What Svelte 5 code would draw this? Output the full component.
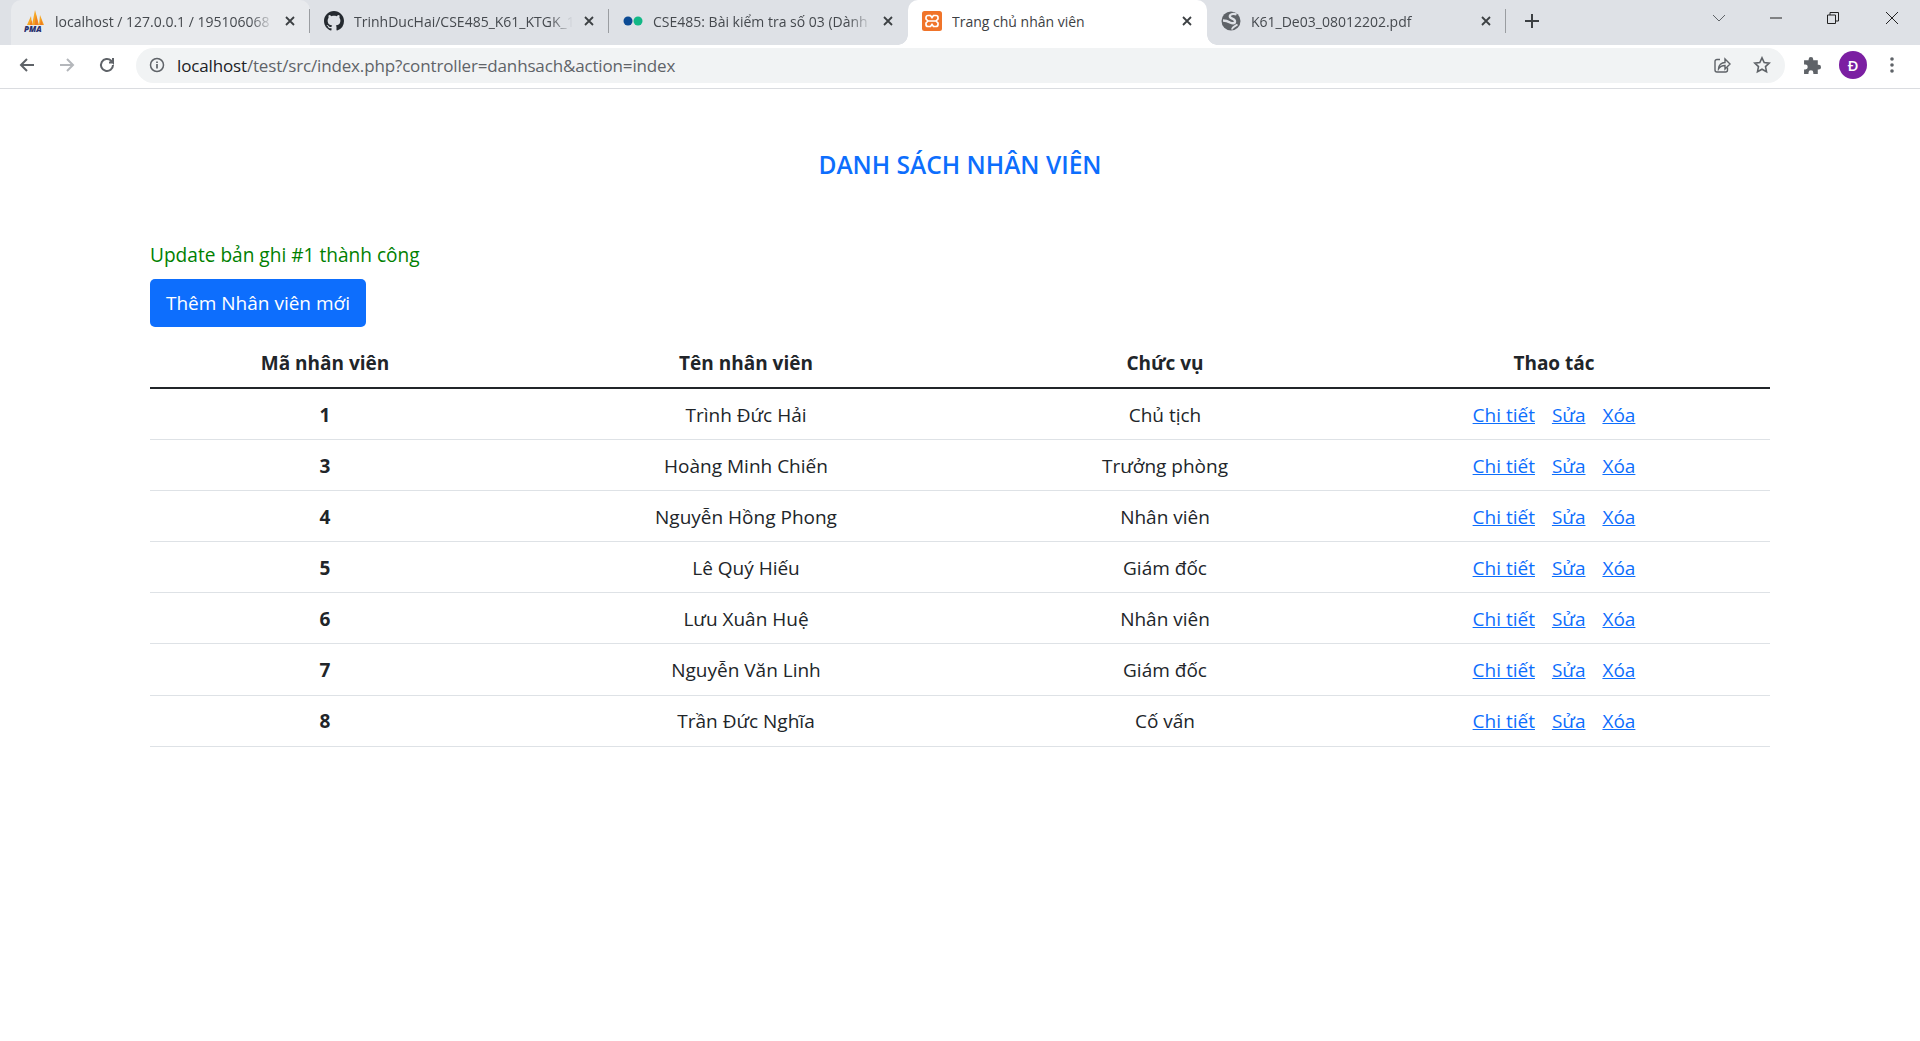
<script>
	const tabs = [
		{ title: 'localhost / 127.0.0.1 / 195106068', icon: 'pma', hover: true },
		{ title: 'TrinhDucHai/CSE485_K61_KTGK_1', icon: 'github' },
		{ title: 'CSE485: Bài kiểm tra số 03 (Dành', icon: 'dots' },
		{ title: 'Trang chủ nhân viên', icon: 'xampp', active: true },
		{ title: 'K61_De03_08012202.pdf', icon: 'globe' }
	];

	const employees = [
		{ id: 1, name: 'Trình Đức Hải', role: 'Chủ tịch' },
		{ id: 3, name: 'Hoàng Minh Chiến', role: 'Trưởng phòng' },
		{ id: 4, name: 'Nguyễn Hồng Phong', role: 'Nhân viên' },
		{ id: 5, name: 'Lê Quý Hiếu', role: 'Giám đốc' },
		{ id: 6, name: 'Lưu Xuân Huệ', role: 'Nhân viên' },
		{ id: 7, name: 'Nguyễn Văn Linh', role: 'Giám đốc' },
		{ id: 8, name: 'Trần Đức Nghĩa', role: 'Cố vấn' }
	];
</script>

<div class="browser">
	<div class="tabstrip">
		{#each tabs as tab}
			<div class="tab" class:active={tab.active} class:hover={tab.hover}>
				<span class="favicon">
					{#if tab.icon === 'pma'}
						<svg viewBox="0 0 22 22" width="22" height="22">
							<path d="M3 15 7 6l1 9zM8 15 11 0l4 15zM15 15l1-10 4 10z" fill="#f6a623" />
							<path d="M5.500 15 7.500 10l1 5zM10.500 15 12 5l2.500 10zM16 15l1-6 2 6z" fill="#ee7f22" />
							<text x="0" y="21.500" class="pma">PMA</text>
						</svg>
					{:else if tab.icon === 'github'}
						<svg viewBox="0 0 16 16" width="20" height="20">
							<path fill="#24292f" d="M8 0C3.580 0 0 3.580 0 8c0 3.540 2.290 6.530 5.470 7.590.4.070.55-.17.55-.38 0-.19-.01-.82-.01-1.490-2.010.37-2.530-.49-2.690-.94-.09-.23-.48-.94-.82-1.130-.28-.15-.68-.52-.01-.53.63-.01 1.080.58 1.230.82.720 1.210 1.870.87 2.330.66.070-.52.280-.87.510-1.070-1.780-.2-3.640-.89-3.640-3.950 0-.87.310-1.590.820-2.150-.08-.2-.36-1.020.08-2.120 0 0 .67-.21 2.200.82.640-.18 1.320-.27 2-.27s1.360.09 2 .27c1.530-1.040 2.200-.82 2.200-.82.440 1.100.160 1.920.080 2.120.510.560.820 1.270.820 2.150 0 3.070-1.870 3.750-3.650 3.950.290.250.540.730.540 1.480 0 1.070-.01 1.930-.01 2.200 0 .210.150.460.550.380A8.010 8.010 0 0 0 16 8c0-4.420-3.580-8-8-8z" />
						</svg>
					{:else if tab.icon === 'dots'}
						<svg viewBox="0 0 20 20" width="20" height="20">
							<circle cx="5" cy="10" r="4.500" fill="#0b4a94" />
							<circle cx="15" cy="10" r="4.500" fill="#12b886" />
						</svg>
					{:else if tab.icon === 'xampp'}
						<svg viewBox="0 0 20 20" width="20" height="20">
							<rect width="20" height="20" rx="2.500" fill="#f0742a" />
							<path d="M6 4.500h2.500L10 6.500l1.500-2H14a2 2 0 0 1 2 2V8l-2 2 2 2v1.500a2 2 0 0 1-2 2h-2.500l-1.500-2-1.500 2H6a2 2 0 0 1-2-2V12l2-2-2-2V6.500a2 2 0 0 1 2-2zM6.500 10h7" fill="none" stroke="#fff" stroke-width="1.700" />
						</svg>
					{:else}
						<svg viewBox="0 0 20 20" width="20" height="20">
							<circle cx="10" cy="10" r="9.500" fill="#5f6368" />
							<path d="M15.500 3.500C12 2 8 3.500 9 6c.8 2 5 1.500 5 4.500 0 2.500-3 2-5 1C6.500 10 4 9.500 2 9.500" fill="none" stroke="#dee1e6" stroke-width="2.400" />
							<path d="M11 18.500c0-2 2-3 5.500-5" fill="none" stroke="#dee1e6" stroke-width="1.800" />
						</svg>
					{/if}
				</span>
				<span class="tab-title">{tab.title}</span>
				<svg class="tab-close" viewBox="0 0 12 12" width="12" height="12">
					<path d="M2 2l8 8M10 2l-8 8" stroke="#3c4043" stroke-width="1.800" fill="none" />
				</svg>
			</div>
		{/each}
		<svg class="newtab" viewBox="0 0 16 16" width="16" height="16">
			<path d="M8 1v14M1 8h14" stroke="#3c4043" stroke-width="2" fill="none" />
		</svg>
		<div class="window-controls">
			<svg class="ctl-chevron" viewBox="0 0 14 8" width="14" height="8"><path d="M1 1l6 6 6-6" stroke="#5f6368" fill="none" /></svg>
			<svg class="ctl-min" viewBox="0 0 12 2" width="12" height="2"><path d="M0 1h12" stroke="#222" /></svg>
			<svg class="ctl-max" viewBox="0 0 12 12" width="12" height="12"><path d="M.5 3h8v8.500h-8zM3 3V.5h8.500V9H8.500" stroke="#222" fill="none" /></svg>
			<svg class="ctl-close" viewBox="0 0 14 14" width="14" height="14"><path d="M1 1l12 12M13 1L1 13" stroke="#222" fill="none" /></svg>
		</div>
	</div>
	<div class="toolbar">
		<svg viewBox="0 0 18 18" width="18" height="18"><path d="M16 9H3M9 3L3 9l6 6" stroke="#5f6368" stroke-width="2" fill="none" /></svg>
		<svg viewBox="0 0 18 18" width="18" height="18"><path d="M2 9h13M9 3l6 6-6 6" stroke="#b4b7bb" stroke-width="2" fill="none" /></svg>
		<svg viewBox="0 0 18 18" width="18" height="18"><path d="M15 9a6 6 0 1 1-1.800-4.300L15 6.500V2M15 6.500h-4" stroke="#5f6368" stroke-width="2" fill="none" /></svg>
		<div class="omnibox">
			<svg viewBox="0 0 16 16" width="16" height="16">
				<circle cx="8" cy="8" r="6.500" stroke="#5f6368" stroke-width="1.500" fill="none" />
				<path d="M8 7v4.500M8 4.500v1.500" stroke="#5f6368" stroke-width="1.700" />
			</svg>
			<span class="url"><b>localhost</b>/test/src/index.php?controller=danhsach&amp;action=index</span>
			<svg viewBox="0 0 18 18" width="18" height="18">
				<path d="M7 3.500H4a2 2 0 0 0-2 2V14a2 2 0 0 0 2 2h8.500a2 2 0 0 0 2-2v-2.500" stroke="#5f6368" stroke-width="1.400" fill="none" />
				<path d="M5.500 13c0-4 3-6.500 6.500-6.500V3l5 5-5 5V9.500c-3 0-5 1-6.500 3.500z" stroke="#5f6368" stroke-width="1.400" fill="#f1f3f4" />
			</svg>
			<svg viewBox="0 0 18 18" width="18" height="18">
				<path d="M9 1.800l2.200 4.700 5 .6-3.700 3.500 1 5.100L9 13.200l-4.500 2.500 1-5.100L1.800 7.100l5-.6z" stroke="#5f6368" stroke-width="1.600" fill="none" />
			</svg>
		</div>
		<svg class="puzzle" viewBox="0 0 18 18" width="19" height="19">
			<path fill="#5f6368" d="M7.500 1a2.200 2.200 0 0 1 2.200 2.200V4H14v4.300h.8a2.300 2.300 0 1 1 0 4.600H14V17H9.800v-1.200a2.300 2.300 0 1 0-4.600 0V17H1v-4.300h1.200a2.300 2.300 0 1 0 0-4.600H1V4h4.300v-.8A2.200 2.200 0 0 1 7.500 1z" />
		</svg>
		<span class="avatar">Đ</span>
		<svg viewBox="0 0 4 18" width="4" height="18">
			<circle cx="2" cy="3" r="1.800" fill="#5f6368" /><circle cx="2" cy="9" r="1.800" fill="#5f6368" /><circle cx="2" cy="15" r="1.800" fill="#5f6368" />
		</svg>
	</div>
</div>

<main class="container">
	<h1>DANH SÁCH NHÂN VIÊN</h1>
	<p class="message">Update bản ghi #1 thành công</p>
	<a class="btn" href="#add">Thêm Nhân viên mới</a>
	<table>
		<colgroup>
			<col class="c1" /><col class="c2" /><col class="c3" /><col class="c4" />
		</colgroup>
		<thead>
			<tr>
				<th>Mã nhân viên</th>
				<th>Tên nhân viên</th>
				<th>Chức vụ</th>
				<th>Thao tác</th>
			</tr>
		</thead>
		<tbody>
			{#each employees as e}
				<tr>
					<th>{e.id}</th>
					<td>{e.name}</td>
					<td>{e.role}</td>
					<td>
						<a href="#detail">Chi tiết</a>
						<a href="#edit">Sửa</a>
						<a href="#delete">Xóa</a>
					</td>
				</tr>
			{/each}
		</tbody>
	</table>
</main>

<style>
	:global(body) {
		background: #fff;
		font-family: "Open Sans", "Noto Sans", sans-serif;
		color: #212529;
	}

	.tabstrip {
		display: flex;
		align-items: center;
		height: 45px;
		padding-left: 11px;
		background: #dee1e6;
	}

	.tab {
		display: flex;
		align-items: center;
		position: relative;
		flex: none;
		width: 299px;
		height: 45px;
		padding: 0 14px 3px 14px;
		box-sizing: border-box;
		color: #45494e;
	}

	.tab::after {
		content: '';
		position: absolute;
		right: 0;
		top: 9px;
		height: 24px;
		width: 1px;
		background: #9a9da1;
	}

	.tab.hover {
		background: #e8eaed;
		border-radius: 10px 10px 0 0;
	}

	.tab.active {
		background: #fff;
		border-radius: 10px 10px 0 0;
		color: #3c4043;
	}

	/* the little flares at the foot of the active tab */
	.tab.active::before,
	.tab.active::after {
		content: '';
		position: absolute;
		top: auto;
		bottom: 0;
		width: 10px;
		height: 10px;
		background: radial-gradient(circle at 0 0, #dee1e6 9.500px, #fff 10px);
	}

	.tab.active::before {
		left: -10px;
	}

	.tab.active::after {
		right: -10px;
		background: radial-gradient(circle at 100% 0, #dee1e6 9.500px, #fff 10px);
	}

	.tab:nth-child(3)::after,
	.tab.hover::after {
		background: #9a9da1;
	}

	.tab:nth-child(3)::after {
		display: none;
	}

	.favicon {
		display: flex;
		flex: none;
		width: 20px;
		margin-right: 10px;
		justify-content: center;
	}

	.favicon svg {
		flex: none;
	}

	.pma {
		font-size: 8px;
		font-weight: 800;
		font-style: italic;
		fill: #27306e;
	}

	.tab-title {
		flex: 1;
		overflow: hidden;
		white-space: nowrap;
		font-size: 14px;
		mask-image: linear-gradient(to left, transparent, #000 24px);
	}

	.tab.active .tab-title,
	.tab:last-of-type .tab-title {
		mask-image: none;
	}

	.tab-close {
		flex: none;
		margin-left: 10px;
	}

	.newtab {
		margin-left: 18px;
		margin-bottom: 3px;
	}

	.window-controls {
		display: flex;
		align-items: center;
		margin-left: auto;
		height: 36px;
		align-self: flex-start;
	}

	.ctl-chevron {
		margin-right: 44px;
	}

	.ctl-min {
		margin-right: 45px;
	}

	.ctl-max {
		margin-right: 45.500px;
	}

	.ctl-close {
		margin-right: 21.500px;
	}

	.toolbar {
		display: flex;
		align-items: center;
		height: 44px;
		box-sizing: border-box;
		padding: 0 26px 3px 18px;
		border-bottom: 1px solid #dadce0;
		gap: 22px;
	}

	.omnibox {
		display: flex;
		align-items: center;
		flex: 1;
		height: 35px;
		margin-left: -2px;
		padding: 0 14px 0 13px;
		background: #f1f3f4;
		border-radius: 18px;
		gap: 22px;
	}

	.url {
		flex: 1;
		margin-left: -10px;
		font-size: 17px;
		letter-spacing: -0.15px;
		color: #5f6368;
	}

	.url b {
		font-weight: 400;
		color: #202124;
	}

	.puzzle {
		margin-left: -4px;
	}

	.avatar {
		display: flex;
		align-items: center;
		justify-content: center;
		width: 28px;
		height: 28px;
		margin: 0 1px 0 -5px;
		border-radius: 50%;
		background: #7b1fa2;
		color: #fff;
		font-size: 15px;
		font-weight: 600;
	}

	.container {
		width: 1620px;
		margin-left: 150px;
		padding-top: 61px;
	}

	h1 {
		margin: 0 0 60px;
		text-align: center;
		font-size: 24.500px;
		font-weight: 600;
		line-height: 30px;
		color: #0d6efd;
	}

	.message {
		margin: 0 0 9px;
		font-size: 19.100px;
		line-height: 30px;
		color: green;
	}

	.btn {
		display: inline-block;
		padding: 8px 16px;
		background: #0d6efd;
		border-radius: 5px;
		color: #fff;
		font-size: 19px;
		line-height: 32px;
		text-decoration: none;
	}

	table {
		width: 100%;
		margin-top: 10px;
		table-layout: fixed;
		border-collapse: collapse;
		font-size: 19px;
	}

	.c1 { width: 350px; }
	.c2 { width: 492px; }
	.c3 { width: 346px; }
	.c4 { width: 432px; }

	tr {
		height: 51.100px;
	}

	th, td {
		padding: 10.500px 10px 9.500px;
		text-align: center;
		line-height: 30px;
		border-bottom: 1px solid #dee2e6;
	}

	thead th {
		border-bottom: 2px solid #212529;
	}

	td a {
		margin: 0 6px;
		color: #0d6efd;
	}
</style>
